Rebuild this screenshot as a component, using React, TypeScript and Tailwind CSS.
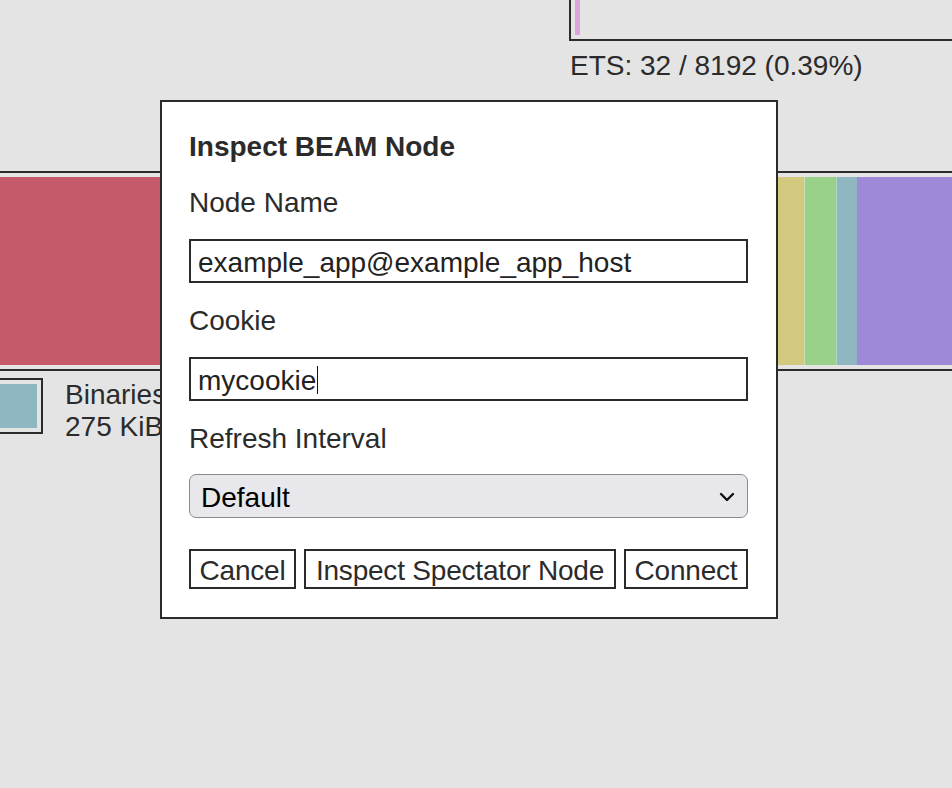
import React from "react";

const ink = "text-[#2b2b2b]";

function Field({ value, caret = false }: { value: string; caret?: boolean }) {
  return (
    <div className="flex h-[44px] items-center border-2 border-[#2b2b2b] bg-white pl-[7px] pt-[3px] text-[#222]">
      <span>{value}</span>
      {caret && <span className="ml-px inline-block h-[28px] w-px -translate-y-[1px] bg-[#111]" />}
    </div>
  );
}

function Button({ children, className = "" }: { children: React.ReactNode; className?: string }) {
  return (
    <button
      className={`h-[40px] shrink-0 whitespace-nowrap border-2 border-[#2b2b2b] bg-white pt-[3px] text-center leading-[32px] tracking-[-0.2px] ${ink} ${className}`}
    >
      {children}
    </button>
  );
}

function InspectDialog() {
  return (
    <div className="absolute left-[160px] top-[100px] flex w-[618px] flex-col border-2 border-[#2b2b2b] bg-white pb-[28px] pl-[27px] pr-[28px] pt-[29px]">
      <h2 className="font-bold">Inspect BEAM Node</h2>
      <label className="mt-[24px]">Node Name</label>
      <div className="mt-[20px]">
        <Field value="example_app@example_app_host" />
      </div>
      <label className="mt-[22px]">Cookie</label>
      <div className="mt-[20px]">
        <Field value="mycookie" caret />
      </div>
      <label className="mt-[22px]">Refresh Interval</label>
      <div className="relative mt-[19px]">
        <select
          defaultValue="default"
          className="h-[44px] w-full appearance-none rounded-[7px] border-[1.5px] border-[#8b8a90] bg-[#e8e7ec] pl-[11px] pt-[3px] text-black outline-none"
        >
          <option value="default">Default</option>
        </select>
        <svg
          className="pointer-events-none absolute right-[13px] top-[18px]"
          width="16"
          height="10"
          viewBox="0 0 16 10"
          fill="none"
        >
          <path d="M2 2 L8 8 L14 2" stroke="#111" strokeWidth="2.4" strokeLinecap="round" strokeLinejoin="round" />
        </svg>
      </div>
      <div className="mt-[31px] flex gap-2">
        <Button className="w-[107px]">Cancel</Button>
        <Button className="w-[312px]">Inspect Spectator Node</Button>
        <Button className="w-[124px]">Connect</Button>
      </div>
    </div>
  );
}

export default function App() {
  return (
    <div
      className={`relative h-[788px] w-[952px] overflow-hidden bg-[#e4e4e4] font-['Liberation_Sans',Arial,sans-serif] text-[28px] leading-[32px] ${ink}`}
    >
      {/* process chart box, mostly scrolled off */}
      <div className="-mt-[20px] ml-[569px] h-[61px] w-[500px] border-2 border-[#2b2b2b] p-1">
        <div className="h-full w-[5px] bg-[#dba5de]" />
      </div>
      <div className="ml-[570px] mt-[8px] pt-px">ETS: 32 / 8192 (0.39%)</div>

      {/* memory bar */}
      <div className="-ml-[20px] mt-[89px] flex h-[200px] w-[1000px] border-2 border-[#2b2b2b] p-1">
        <div className="w-[792px] bg-[#c55a6b]" />
        <div className="w-[26px] bg-[#d3c97e]" />
        <div className="w-[32px] border-l border-[#c9dfb4] bg-[#9ad18a]" />
        <div className="w-[21px] border-l border-[#b4d3c4] bg-[#8fb7c2]" />
        <div className="flex-1 bg-[#9e89d8]" />
      </div>

      {/* legend */}
      <div className="mt-[7px] flex items-start">
        <div className="-ml-[13px] border-2 border-[#2b2b2b] p-1">
          <div className="h-[44px] w-[44px] bg-[#8fb7c2]" />
        </div>
        <div className="ml-[22px] mt-px">
          <div>Binaries</div>
          <div>275 KiB</div>
        </div>
      </div>

      <InspectDialog />
    </div>
  );
}
